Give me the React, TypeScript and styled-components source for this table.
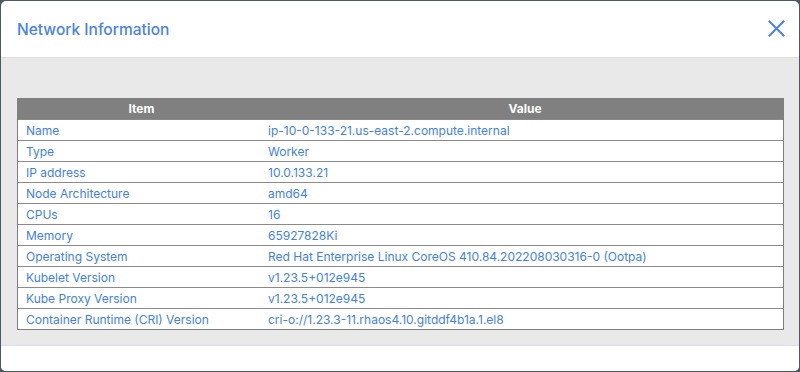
import React from "react";
import styled, { createGlobalStyle } from "styled-components";

const Global = createGlobalStyle`
  html, body { margin: 0; padding: 0; background: #4e5763; }
  body { font-family: Inter, "Liberation Sans", Arial, Helvetica, sans-serif; }
  * { box-sizing: border-box; }
`;

const Overlay = styled.div`
  width: 800px;
  height: 372px;
  padding: 1px 1px 1px 1px;
  background: #4e5763;
`;

const Modal = styled.div`
  width: 798px;
  height: 370px;
  background: #ffffff;
  border-radius: 5px;
  overflow: hidden;
  display: flex;
  flex-direction: column;
`;

const Header = styled.div`
  height: 57px;
  flex: none;
  display: flex;
  align-items: center;
  justify-content: space-between;
  padding: 0 14px 0 16px;
  border-bottom: 1px solid #dedede;
`;

const Title = styled.h2`
  margin: 0;
  font-size: 15.5px;
  font-weight: 500;
  color: #4a82ea;
`;

const CloseButton = styled.button`
  border: 0;
  background: transparent;
  padding: 0;
  width: 18px;
  height: 18px;
  display: flex;
  align-items: center;
  justify-content: center;
  cursor: pointer;
  margin-top: -1px;
`;

const Body = styled.div`
  flex: none;
  height: 288px;
  background: #e9e9e9;
  padding: 40px 15px 16px 16px;
  border-bottom: 1px solid #dcdce4;
`;

const Table = styled.div`
  border: 1px solid #7f7f7f;
  border-top: 0;
  background: #ffffff;
`;

const HeadRow = styled.div`
  display: grid;
  grid-template-columns: 243px 1fr;
  height: 21px;
  background: #808080;
  color: #ffffff;
  font-weight: 700;
  font-size: 12px;
  align-items: center;
  margin: 0 -1px;
`;

const HeadCell = styled.div`
  text-align: center;
  padding-left: 6px;
`;

const Row = styled.div`
  display: grid;
  grid-template-columns: 242px 1fr;
  height: 21px;
  border-top: 1px solid #8a8a8a;
  align-items: center;
  font-size: 12px;
  color: #3f7fe6;
`;

const Cell = styled.div`
  padding-left: 8px;
  white-space: nowrap;
`;

const Footer = styled.div`
  flex: 1;
  background: #ffffff;
`;

const rows: [string, string][] = [
  ["Name", "ip-10-0-133-21.us-east-2.compute.internal"],
  ["Type", "Worker"],
  ["IP address", "10.0.133.21"],
  ["Node Architecture", "amd64"],
  ["CPUs", "16"],
  ["Memory", "65927828Ki"],
  ["Operating System", "Red Hat Enterprise Linux CoreOS 410.84.202208030316-0 (Ootpa)"],
  ["Kubelet Version", "v1.23.5+012e945"],
  ["Kube Proxy Version", "v1.23.5+012e945"],
  ["Container Runtime (CRI) Version", "cri-o://1.23.3-11.rhaos4.10.gitddf4b1a.1.el8"],
];

export default function App() {
  return (
    <>
      <Global />
      <Overlay>
        <Modal>
          <Header>
            <Title>Network Information</Title>
            <CloseButton aria-label="Close">
              <svg width="17" height="17" viewBox="0 0 17 17">
                <path d="M1.5 1.5 L15.5 15.5 M15.5 1.5 L1.5 15.5" stroke="#4a82ea" strokeWidth="2" strokeLinecap="square" fill="none" />
              </svg>
            </CloseButton>
          </Header>
          <Body>
            <Table>
              <HeadRow>
                <HeadCell>Item</HeadCell>
                <HeadCell>Value</HeadCell>
              </HeadRow>
              {rows.map(([k, v]) => (
                <Row key={k}>
                  <Cell>{k}</Cell>
                  <Cell>{v}</Cell>
                </Row>
              ))}
            </Table>
          </Body>
          <Footer />
        </Modal>
      </Overlay>
    </>
  );
}
